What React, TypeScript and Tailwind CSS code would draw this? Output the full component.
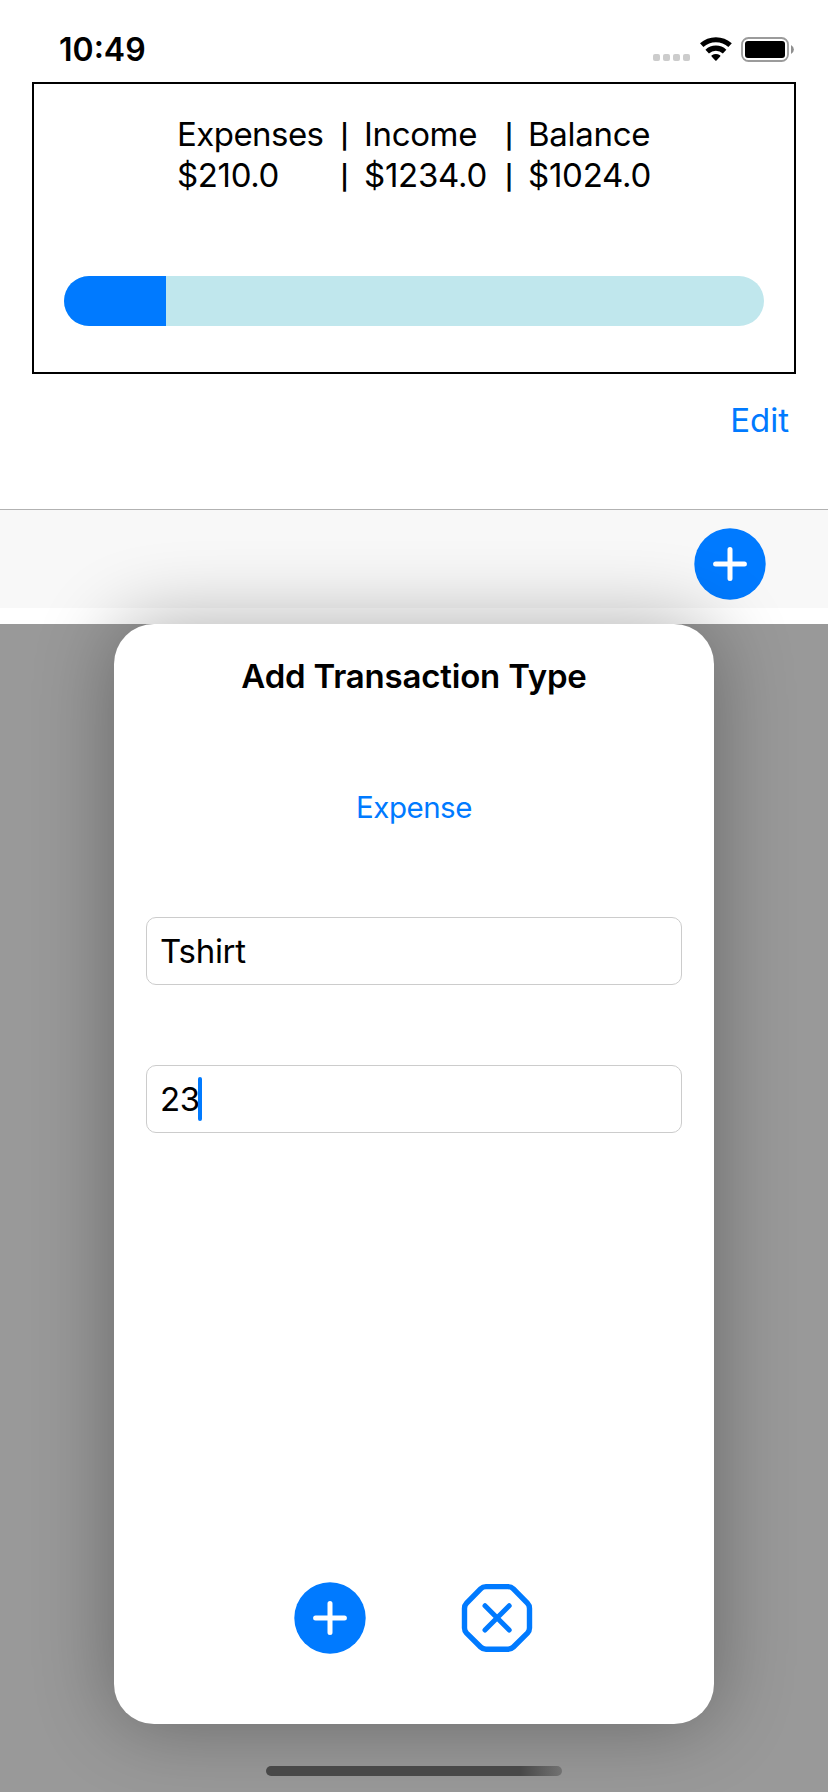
function WifiIcon() {
  return (
    <svg width="32" height="25" viewBox="0 0 32 25" fill="none">
      <path d="M1.7 8.2A21.1 21.1 0 0 1 30.1 8.2" stroke="#000" strokeWidth="5.1" />
      <path d="M7.2 14.6A12.6 12.6 0 0 1 24.6 14.6" stroke="#000" strokeWidth="5.1" />
      <path d="M11.6 19.4Q11 18.8 11.8 18.3Q15.9 15.9 20 18.3Q20.8 18.8 20.2 19.4L16.5 23.4Q15.9 24 15.3 23.4Z" fill="#000" />
    </svg>
  );
}

function BatteryIcon() {
  return (
    <svg width="54" height="25" viewBox="0 0 54 25" fill="none">
      <rect x="1" y="1" width="46" height="23" rx="6.5" stroke="#9b9b9b" strokeWidth="1.8" />
      <rect x="4" y="4" width="40" height="17" rx="3" fill="#000" />
      <path d="M50 8Q52.9 9.5 52.9 12.5T50 17Z" fill="#8f8f8f" />
    </svg>
  );
}

function PlusCircle() {
  return (
    <svg width="72" height="72" viewBox="0 0 72 72" fill="none">
      <circle cx="36" cy="36" r="35.7" fill="#007aff" />
      <path d="M36 21.6V50.4M21.6 36H50.4" stroke="#fff" strokeWidth="5" strokeLinecap="round" />
    </svg>
  );
}

function CloseOctagon() {
  return (
    <svg width="72" height="72" viewBox="0 0 72 72" fill="none" stroke="#007aff" strokeWidth="5.4">
      <path
        strokeLinejoin="round"
        d="M25 4.6H47Q50.2 4.6 52.4 6.8L66.4 21.2Q68.5 23.4 68.5 26.4V46Q68.5 49 66.4 51.2L52.4 65Q50.2 67.2 47 67.2H25Q21.8 67.2 19.6 65L5.6 51.2Q3.5 49 3.5 46V26.4Q3.5 23.4 5.6 21.2L19.6 6.8Q21.8 4.6 25 4.6Z"
      />
      <path strokeLinecap="round" strokeWidth="5" d="M24 23.7L48.2 48M48.2 23.7L24 48" />
    </svg>
  );
}

function Divider() {
  return <span className="h-[41px] pt-[5px] text-center text-[24px] leading-[36px] font-semibold">|</span>;
}

export default function App() {
  return (
    <div className="flex h-[1792px] w-[828px] flex-col overflow-hidden bg-white font-['Inter',sans-serif] text-[33px] leading-[41px] text-black">
      <header className="flex h-[82px] shrink-0 items-start justify-between pr-[33px] pl-[59px]">
        <span className="mt-[29px] text-[32px] font-semibold">10:49</span>
        <div className="mt-[37px] flex items-start">
          <div className="mt-[17px] mr-[10px] flex gap-[3px]">
            {[0, 1, 2, 3].map((dot) => (
              <span key={dot} className="size-[7px] rounded-[2px] bg-[#cccccc]" />
            ))}
          </div>
          <WifiIcon />
          <div className="ml-[9px]">
            <BatteryIcon />
          </div>
        </div>
      </header>

      <section className="mx-8 h-[292px] shrink-0 border-2 border-black pt-[30px]">
        <div className="ml-[143px] grid w-[477px] grid-cols-[148px_39px_126px_38px_126px] whitespace-nowrap">
          <span className="tracking-[-0.55px]">Expenses</span>
          <Divider />
          <span className="tracking-[-0.35px]">Income</span>
          <Divider />
          <span className="tracking-[-0.3px]">Balance</span>
          <span className="tracking-[-0.35px]">$210.0</span>
          <Divider />
          <span className="tracking-[-0.25px]">$1234.0</span>
          <Divider />
          <span className="tracking-[-0.25px]">$1024.0</span>
        </div>
        <div className="mx-[30px] mt-[80px] h-[50px] overflow-hidden rounded-full bg-[#c0e7ed]">
          <div className="h-full w-[102px] bg-[#007aff]" />
        </div>
      </section>

      <div className="flex h-[135px] shrink-0 justify-end pt-[26px] pr-[39px] text-[#007aff]">
        <span>Edit</span>
      </div>

      <div className="flex h-[99px] shrink-0 items-start justify-end border-t border-[#b2b2b2] bg-[#f8f8f8] pt-[18px] pr-[62px]">
        <PlusCircle />
      </div>

      <main className="mt-4 flex grow flex-col items-center bg-[#999999]">
        <div className="flex h-[1100px] w-[600px] shrink-0 flex-col rounded-[40px] bg-white px-8 shadow-[0_0_80px_rgba(0,0,0,0.33)]">
          <h1 className="mt-[32px] text-center font-semibold tracking-[-0.2px]">Add Transaction Type</h1>
          <span className="mt-[90px] text-center text-[29.5px] tracking-[-0.5px] text-[#007aff]">Expense</span>
          <div className="mt-[89px] flex h-[68px] shrink-0 items-center rounded-[10px] border border-[#cccccc] pl-[13px]">
            <span className="tracking-[-0.3px]">Tshirt</span>
          </div>
          <div className="mt-20 flex h-[68px] shrink-0 items-center rounded-[10px] border border-[#cccccc] pl-[13px]">
            <span className="tracking-[-0.5px]">23</span>
            <span className="-ml-[2px] h-11 w-1 rounded-[2px] bg-[#007aff]" />
          </div>
          <div className="mt-auto mb-[70px] ml-[148px] flex gap-[95px]">
            <PlusCircle />
            <CloseOctagon />
          </div>
        </div>
        <div className="mt-[42px] h-[10px] w-[296px] rounded-full bg-[linear-gradient(90deg,#484848_0%,#484848_86%,#727272_100%)]" />
      </main>
    </div>
  );
}
